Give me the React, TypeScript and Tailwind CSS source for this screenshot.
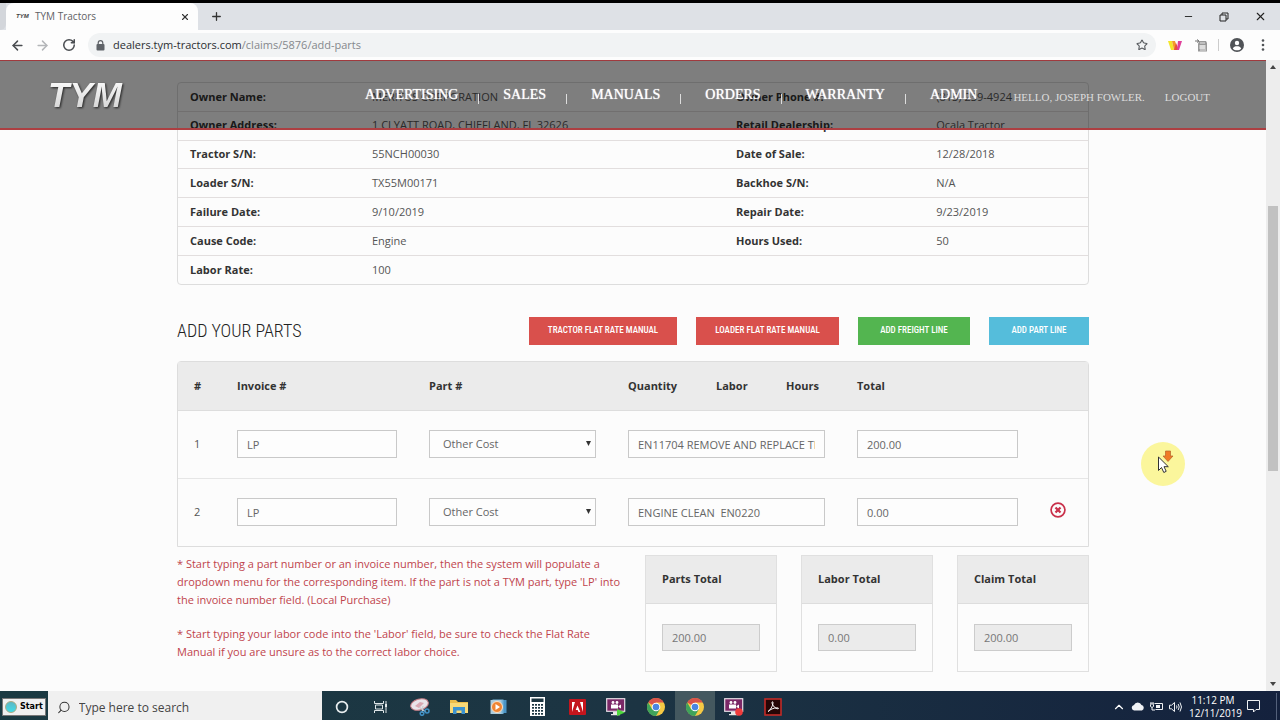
import React from "react";
import {
  ArrowLeft,
  ArrowRight,
  ChevronUp,
  Minus,
  Plus,
  RotateCw,
  Search,
  Star,
  X,
} from "lucide-react";

const details: [string, string, string, string][] = [
  ["Owner Name:", "MERITUS CORPORATION", "Owner Phone #:", "(813) 239-4924"],
  ["Owner Address:", "1 CLYATT ROAD, CHIEFLAND, FL 32626", "Retail Dealership:", "Ocala Tractor"],
  ["Tractor S/N:", "55NCH00030", "Date of Sale:", "12/28/2018"],
  ["Loader S/N:", "TX55M00171", "Backhoe S/N:", "N/A"],
  ["Failure Date:", "9/10/2019", "Repair Date:", "9/23/2019"],
  ["Cause Code:", "Engine", "Hours Used:", "50"],
  ["Labor Rate:", "100", "", ""],
];

const navItems = ["ADVERTISING", "SALES", "MANUALS", "ORDERS", "WARRANTY", "ADMIN"];

const parts = [
  { n: 1, invoice: "LP", labor: "EN11704 REMOVE AND REPLACE THE ENGINE", total: "200.00", removable: false },
  { n: 2, invoice: "LP", labor: "ENGINE CLEAN  EN0220", total: "0.00", removable: true },
];

const totals = [
  { id: "parts-total", label: "Parts Total", value: "200.00" },
  { id: "labor-total", label: "Labor Total", value: "0.00" },
  { id: "claim-total", label: "Claim Total", value: "200.00" },
];

function BrowserChrome() {
  return (
    <div className="shrink-0 border-t-[3px] border-black bg-[#dee1e6]">
      <div className="flex h-[27px] items-stretch">
        <div className="w-[6px] rounded-br-md bg-[#d3d6db]" />
        <div className="flex w-[192px] items-center rounded-t-lg bg-[#fdfdfd] pl-[10px] pr-2">
          <span className="w-[19px] font-['Liberation_Sans'] text-[6px] font-bold italic text-[#444]">TYM</span>
          <span className="flex-1 text-[10px] text-[#5f6165]">TYM Tractors</span>
          <button aria-label="Close tab" className="text-[#333]"><X size={10} strokeWidth={2.6} /></button>
        </div>
        <button aria-label="New tab" className="ml-3 text-[#333]"><Plus size={13} strokeWidth={2.4} /></button>
        <div className="ml-auto flex items-center gap-[25px] pr-[13px] text-[#222]">
          <button aria-label="Minimize"><Minus size={11} strokeWidth={2} /></button>
          <button aria-label="Restore">
            <svg width="10" height="10" viewBox="0 0 10 10" fill="none" stroke="#222" aria-hidden="true">
              <path d="M1 3h6v6H1zM3 3V1h6v6H7" />
            </svg>
          </button>
          <button aria-label="Close"><X size={13} strokeWidth={2} /></button>
        </div>
      </div>
      <div className="flex h-[30px] items-center bg-[#fdfdfd] pl-[10px] pr-[15px]">
        <button aria-label="Back" className="text-[#4a4d51]"><ArrowLeft size={15} strokeWidth={2.4} /></button>
        <button aria-label="Forward" className="ml-[10px] text-[#b4b6b9]"><ArrowRight size={15} strokeWidth={2.4} /></button>
        <button aria-label="Reload" className="ml-[12px] text-[#4a4d51]"><RotateCw size={14} strokeWidth={2.6} /></button>
        <div className="ml-[12px] flex h-6 flex-1 items-center rounded-full bg-[#f1f3f4] pl-2 pr-2">
          <svg width="9" height="11" viewBox="0 0 9 11" aria-hidden="true">
            <rect x="0.5" y="4" width="8" height="6.5" rx="1" fill="#5f6368" />
            <path d="M2.2 4.500V3a2.300 2.300 0 0 1 4.600 0v1.500" fill="none" stroke="#5f6368" strokeWidth="1.200" />
          </svg>
          <a href="#url" className="ml-2 flex-1 text-[11px] text-[#85888c]">
            <span className="text-[#2c2e31]">dealers.tym-tractors.com</span>/claims/5876/add-parts
          </a>
          <button aria-label="Bookmark" className="text-[#55585c]"><Star size={12} strokeWidth={2.2} /></button>
        </div>
        <div className="ml-3 flex items-center">
          <svg width="14" height="11" viewBox="0 0 14 11" aria-hidden="true">
            <path d="M0 1h4l2 9H3z" fill="#f4e72b" />
            <path d="M4 1h3l3 9H6z" fill="#f39a2d" />
            <path d="M6 10 8 3l3 7z" fill="#e8503f" />
            <path d="M9 10 10 1h4l-3 9z" fill="#e0409b" />
          </svg>
          <svg width="13" height="13" viewBox="0 0 13 13" className="ml-[13px]" aria-hidden="true">
            <path d="M0 2h4M2 .5 4 2 2 3.500" stroke="#777" fill="none" />
            <path d="M4 2h7l1 2v8.500H3V5z" fill="#999" />
            <path d="M5 4h5M5 11h6" stroke="#e6e6e6" />
            <rect x="4.500" y="6" width="6" height="4" fill="#ddd" />
          </svg>
          <div className="ml-[10px] h-3 w-px bg-[#ccc]" />
          <svg width="14" height="14" viewBox="0 0 14 14" className="ml-[11px]" aria-hidden="true">
            <circle cx="7" cy="7" r="7" fill="#505357" />
            <circle cx="7" cy="5" r="2.200" fill="#fff" />
            <path d="M2.800 10.500C3.500 8.700 5 8.200 7 8.200s3.500.500 4.200 2.300C10 12 8.700 12.300 7 12.300S4 12 2.800 10.500z" fill="#fff" />
          </svg>
          <svg width="4" height="12" viewBox="0 0 4 12" className="ml-[17px]" aria-hidden="true">
            <circle cx="2" cy="1.500" r="1.300" fill="#505357" />
            <circle cx="2" cy="6" r="1.300" fill="#505357" />
            <circle cx="2" cy="10.500" r="1.300" fill="#505357" />
          </svg>
        </div>
      </div>
    </div>
  );
}

function SiteHeader() {
  return (
    <header className="absolute inset-x-0 top-0 flex h-[70px] items-center border-b-2 border-t border-b-[#ad3f42] border-t-[#a03a3e] bg-black/50 pl-12 pr-[56px] font-['Liberation_Serif',serif]">
      <a
        href="#home"
        className="bg-linear-to-b from-white to-[#d0d0d0] bg-clip-text pr-1 font-['Liberation_Sans',sans-serif] text-[35px] font-bold italic leading-[36px] text-transparent drop-shadow-[1px_1px_1px_#222]"
      >
        TYM
      </a>
      <nav className="ml-auto flex items-center text-[14px] leading-[16px] text-white [text-shadow:0_0_1px_#fff]">
        {navItems.map((item, i) => (
          <React.Fragment key={item}>
            {i > 0 && <span className="ml-5 mr-6 mt-2 h-[10px] w-px bg-[#ddd]" />}
            <a href="#nav">{item}</a>
          </React.Fragment>
        ))}
      </nav>
      <div className="ml-9 flex gap-5 pt-1 text-[11px] leading-[16px] text-[#dcdcdc]">
        <a href="#profile">HELLO, JOSEPH FOWLER.</a>
        <a href="#logout">LOGOUT</a>
      </div>
    </header>
  );
}

const fieldClass =
  "block h-7 w-full rounded-none border border-[#c9c9c9] bg-[#fdfdfd] px-[9px] text-[11px] text-[#666] outline-none";
const actionClass =
  "h-7 font-['Roboto_Condensed','Roboto',sans-serif] text-[9px] font-medium text-white";

function Claim() {
  return (
    <main className="mx-auto w-full max-w-[912px] pt-[22px] text-[11px] text-[#555]">
      <div className="rounded border border-[#ddd]">
        <table className="h-[201px] w-full table-fixed border-collapse text-left">
          <colgroup>
            <col className="w-[20%]" />
            <col className="w-[40%]" />
            <col className="w-[22%]" />
            <col className="w-[18%]" />
          </colgroup>
          <tbody>
            {details.map(([a, b, c, d]) => (
              <tr key={a} className="border-b border-[#e2dede] last:border-b-0">
                <th scope="row" className="whitespace-nowrap px-3 font-bold text-[#333]">{a}</th>
                <td className="whitespace-nowrap px-3">{b}</td>
                <th scope="row" className="whitespace-nowrap px-3 font-bold text-[#333]">{c}</th>
                <td className="whitespace-nowrap px-3">{d}</td>
              </tr>
            ))}
          </tbody>
        </table>
      </div>

      <div className="mt-8 flex items-center justify-between">
        <h2 className="font-['Roboto_Condensed','Roboto',sans-serif] text-[18px] font-light leading-7 text-[#222]">
          ADD YOUR PARTS
        </h2>
        <div className="flex gap-[19px]">
          <button className={`${actionClass} w-[148px] bg-[#d9504c]`}>TRACTOR FLAT RATE MANUAL</button>
          <button className={`${actionClass} w-[143px] bg-[#d9504c]`}>LOADER FLAT RATE MANUAL</button>
          <button className={`${actionClass} w-[112px] bg-[#53b550]`}>ADD FREIGHT LINE</button>
          <button className={`${actionClass} w-[100px] bg-[#55bddb]`}>ADD PART LINE</button>
        </div>
      </div>

      <div className="mt-4 rounded-t border border-[#ddd]">
        <table className="w-full table-fixed border-collapse text-left">
          <colgroup>
            <col className="w-[43px]" />
            <col className="w-[192px]" />
            <col className="w-[199px]" />
            <col className="w-[88px]" />
            <col className="w-[70px]" />
            <col className="w-[71px]" />
            <col className="w-[193px]" />
            <col />
          </colgroup>
          <thead>
            <tr className="h-12 border-b border-[#ddd] bg-[#ebebeb] text-[#333]">
              {["#", "Invoice #", "Part #", "Quantity", "Labor", "Hours", "Total", ""].map((h) => (
                <th key={h} className="px-4 font-bold">{h}</th>
              ))}
            </tr>
          </thead>
          <tbody>
            {parts.map((p) => (
              <tr key={p.n} className="h-[68px] border-b border-[#e6e6e6] last:border-b-0">
                <td className="px-4">{p.n}</td>
                <td className="px-4"><input aria-label={`Invoice # ${p.n}`} defaultValue={p.invoice} className={fieldClass} /></td>
                <td className="px-4">
                  <div className="relative">
                    <select aria-label={`Part # ${p.n}`} className={`${fieldClass} appearance-none pl-[13px]`}>
                      <option>Other Cost</option>
                    </select>
                    <svg width="5" height="6" viewBox="0 0 5 6" className="pointer-events-none absolute right-[5px] top-[11px]" aria-hidden="true">
                      <path d="M0 0h5L2.500 5z" fill="#333" />
                    </svg>
                  </div>
                </td>
                <td colSpan={3} className="px-4"><input aria-label={`Labor ${p.n}`} defaultValue={p.labor} className={fieldClass} /></td>
                <td className="px-4"><input aria-label={`Total ${p.n}`} defaultValue={p.total} className={fieldClass} /></td>
                <td className="px-4">
                  {p.removable && (
                    <button aria-label="Remove line" className="block pb-1">
                      <svg width="16" height="16" viewBox="0 0 16 16">
                        <circle cx="8" cy="8" r="6.900" fill="none" stroke="#c9304a" strokeWidth="1.700" />
                        <path d="m5.500 5.500 5 5m0-5-5 5" stroke="#c9304a" strokeWidth="2.200" />
                      </svg>
                    </button>
                  )}
                </td>
              </tr>
            ))}
          </tbody>
        </table>
      </div>

      <div className="mt-2 flex items-start justify-between">
        <div className="w-[445px] space-y-4 leading-[18px] text-[#c0444c]">
          <p>
            * Start typing a part number or an invoice number, then the system will populate a
            dropdown menu for the corresponding item. If the part is not a TYM part, type 'LP' into
            the invoice number field. (Local Purchase)
          </p>
          <p>
            * Start typing your labor code into the 'Labor' field, be sure to check the Flat Rate
            Manual if you are unsure as to the correct labor choice.
          </p>
        </div>
        <div className="flex gap-6">
          {totals.map((t) => (
            <section key={t.id} className="w-[132px] border border-[#e0e0e0]">
              <label htmlFor={t.id} className="flex h-12 items-center border-b border-[#ddd] bg-[#ebebeb] px-4 font-bold text-[#333]">
                {t.label}
              </label>
              <div className="px-4 py-5">
                <input
                  id={t.id}
                  readOnly
                  value={t.value}
                  className="block h-[27px] w-full border border-[#ccc] bg-[#ebebeb] px-[9px] text-[11px] text-[#777] outline-none"
                />
              </div>
            </section>
          ))}
        </div>
      </div>
    </main>
  );
}

function Scrollbar() {
  return (
    <div className="flex w-[14px] shrink-0 flex-col items-center bg-[#ededed] py-[5px]">
      <svg width="6" height="4" viewBox="0 0 6 4" aria-hidden="true"><path d="M0 4h6L3 0z" fill="#444" /></svg>
      <div className="grow-[137]" />
      <div className="w-[10px] grow-[265] bg-[#c1c1c1]" />
      <div className="grow-[211]" />
      <svg width="6" height="4" viewBox="0 0 6 4" aria-hidden="true"><path d="M0 0h6L3 4z" fill="#444" /></svg>
    </div>
  );
}

function Pointer() {
  return (
    <svg width="46" height="46" viewBox="0 0 46 46" className="pointer-events-none absolute left-[1140px] top-[381px]" aria-hidden="true">
      <circle cx="23" cy="23" r="22" fill="#fbf69c" />
      <path d="M25.500 10h5v5h2.500L28 20.500 23 15h2.500z" fill="#f07a26" stroke="#b5622b" strokeWidth="0.700" />
      <path d="M18.500 16v13.500l3-3 2.300 5 2.400-1.200-2.200-4.600h4.300z" fill="#fff" stroke="#333" strokeWidth="1" />
    </svg>
  );
}

const Chrome = () => (
  <svg width="18" height="18" viewBox="0 0 18 18" aria-hidden="true">
    <circle cx="9" cy="9" r="9" fill="#f6c944" />
    <path d="M9 9 1.200 4.500A9 9 0 0 1 16.800 4.500H9z" fill="#d9534a" />
    <path d="M1.200 4.500A9 9 0 0 0 9 18l3.900-6.750L9 9 5.100 11.250z" fill="#3fa35b" />
    <circle cx="9" cy="9" r="4.300" fill="#fff" />
    <circle cx="9" cy="9" r="3.300" fill="#4a86e0" />
  </svg>
);

const Recorder = ({ children }: { children: React.ReactNode }) => (
  <svg width="20" height="18" viewBox="0 0 20 18" aria-hidden="true">
    <rect x="0.700" y="0.700" width="18" height="12.600" fill="#7b2867" stroke="#e6dfe6" strokeWidth="1.200" />
    <path d="M7 14h5v2h2v1.200H5V16h2z" fill="#e6e6e6" />
    <circle cx="7" cy="4.500" r="1.400" fill="#fff" />
    <circle cx="11" cy="4.500" r="1.400" fill="#fff" />
    <path d="M5 6.500h7v4H5zM12.500 8 15 6.500v4L12.500 9z" fill="#fff" />
    {children}
  </svg>
);

const taskIcons: { name: string; active?: boolean; icon: React.ReactNode }[] = [
  { name: "Cortana", icon: <svg width="14" height="14" viewBox="0 0 14 14"><circle cx="7" cy="7" r="5.400" fill="none" stroke="#e8eef0" strokeWidth="1.700" /></svg> },
  {
    name: "Task View",
    icon: (
      <svg width="14" height="14" viewBox="0 0 14 14" fill="none" stroke="#dfe6e8">
        <path d="M.5 1v2.500h9V1M.5 13v-2.500h9V13M1.500 5h7v4h-7zM12 1v12" />
        <rect x="11" y="4" width="2" height="3" fill="#dfe6e8" stroke="none" />
      </svg>
    ),
  },
  {
    name: "Snipping Tool",
    icon: (
      <svg width="20" height="18" viewBox="0 0 20 18">
        <ellipse cx="9.500" cy="6.500" rx="9" ry="5.500" fill="#e9e4ea" stroke="#c77d86" transform="rotate(-15 9.500 6.500)" />
        <path d="m5 8 5-4 4 1-5 5z" fill="#d9a7b2" />
        <path d="m9 9 7 5M13 8l-1 7" stroke="#c9ccd2" strokeWidth="1.200" />
        <circle cx="17" cy="13" r="2" fill="none" stroke="#3f8fc4" strokeWidth="1.500" />
        <circle cx="12" cy="15.500" r="1.800" fill="none" stroke="#3f8fc4" strokeWidth="1.500" />
      </svg>
    ),
  },
  {
    name: "File Explorer",
    icon: (
      <svg width="18" height="15" viewBox="0 0 18 15">
        <path d="M0 1h6l2 2h10v11H0z" fill="#edbd4a" />
        <path d="M0 4h18v10H0z" fill="#fada77" />
        <path d="M3 15V8h12v7h-3.500v-3.500h-5V15z" fill="#3d93cf" />
      </svg>
    ),
  },
  {
    name: "Media Player",
    icon: (
      <svg width="17" height="16" viewBox="0 0 17 16">
        <rect x="5" y="1" width="11.500" height="13" fill="#4a94c5" />
        <rect x="2.500" y="0.500" width="11" height="14.500" fill="#79b3d6" />
        <rect x="0.500" y="1" width="11" height="14" fill="#a9cbdd" />
        <circle cx="7" cy="8" r="5.500" fill="#ee8432" stroke="#fbe0c5" />
        <path d="m5.500 5 4.500 3-4.500 3z" fill="#fff" />
      </svg>
    ),
  },
  {
    name: "Calculator",
    icon: (
      <svg width="15" height="19" viewBox="0 0 15 19">
        <rect width="15" height="19" fill="#fff" />
        <rect x="1.500" y="1.500" width="12" height="3.500" fill="#1c3540" />
        <g fill="#1c3540">
          {[7, 10, 13, 16].map((y) => [2, 5, 8, 11].map((x) => <rect key={`${x}-${y}`} x={x} y={y} width="2" height="1.700" />))}
        </g>
      </svg>
    ),
  },
  {
    name: "Adobe",
    icon: (
      <svg width="17" height="16" viewBox="0 0 17 16">
        <rect width="17" height="16" rx="1" fill="#c4151d" />
        <path d="M3 13V3h3zM14 13V3h-3zM8.500 6.500 11.300 13H9.500l-.8-2H6.700z" fill="#fff" />
      </svg>
    ),
  },
  { name: "Camtasia", icon: <Recorder><path d="m11 11 8 3.500-8 3.500z" fill="#4ed83d" /></Recorder> },
  { name: "Chrome", icon: <Chrome /> },
  { name: "Chrome window", active: true, icon: <Chrome /> },
  { name: "Recorder", icon: <Recorder><circle cx="15" cy="14" r="3.800" fill="#ef3b3b" /></Recorder> },
  {
    name: "Acrobat Reader",
    icon: (
      <svg width="18" height="18" viewBox="0 0 18 18">
        <rect x="1" y="1" width="16" height="16" fill="#250606" stroke="#c22b27" strokeWidth="1.600" />
        <path d="M4 13.500c2-1 5-5.500 5-9 0-1.200-1.200-1-1 .3.500 3 3.500 6 6 6 1.200-.3.300-1.200-1.500-1-3 .2-6 1.500-8.500 3.700z" fill="none" stroke="#fff" />
      </svg>
    ),
  },
];

function Taskbar() {
  return (
    <footer className="flex h-[29px] shrink-0 items-stretch bg-linear-to-r from-[#1b3a42] via-[#1c3443] to-[#14213d] text-white">
      <button className="m-[2px] mt-[7px] flex h-[18px] w-11 items-center gap-[3px] border border-[#777] bg-[#f0f0f0] px-[2px] font-['DejaVu_Sans',sans-serif] text-[8px] font-bold text-black">
        <span className="size-3 shrink-0 rounded-full border border-[#a9aa83] bg-linear-to-b from-[#5bb7c4] to-[#3cdce8]" />
        Start
      </button>
      <label className="flex w-[274px] items-center bg-[#f0f0f0] pl-[9px] pt-1">
        <Search size={15} strokeWidth={1.800} className="-scale-x-100 text-[#333]" />
        <input
          aria-label="Type here to search"
          placeholder="Type here to search"
          className="ml-2 w-full bg-transparent text-[12px] text-[#333] outline-none placeholder:text-[#444]"
        />
      </label>
      <div className="grid w-[471px] grid-cols-12">
        {taskIcons.map((t) => (
          <button
            key={t.name}
            aria-label={t.name}
            className={t.active ? "flex items-center justify-center bg-[#44585f] pt-[2px]" : "flex items-center justify-center pt-[2px]"}
          >
            {t.icon}
          </button>
        ))}
      </div>
      <div className="ml-auto flex items-center pr-[3px] pt-[2px]">
        <ChevronUp size={14} strokeWidth={2} />
        <svg width="14" height="9" viewBox="0 0 14 9" className="ml-[5px]" aria-hidden="true">
          <path d="M3 8.500A2.800 2.800 0 0 1 3 3a4 4 0 0 1 7.500 0A2.900 2.900 0 0 1 11 8.500z" fill="#f0f2f5" />
        </svg>
        <svg width="13" height="11" viewBox="0 0 13 11" className="ml-[5px]" fill="none" stroke="#f0f2f5" aria-hidden="true">
          <path d="M4.500 2.500h8v6h-7M0 3h4M1 1v2M3 1v2M.5 3.500v2L2 6.500l1.500-1v-2M2 6.500v2.500h3" />
          <rect x="6" y="4" width="4" height="3" fill="#f0f2f5" stroke="none" />
        </svg>
        <svg width="13" height="12" viewBox="0 0 13 12" className="ml-[6px]" fill="none" stroke="#f0f2f5" aria-hidden="true">
          <path d="M.5 4.200h2L5.500 1.500v9l-3-2.700h-2zM7.500 4.500q1 1.500 0 3M9.200 3q2 3 0 6M11 1.500q3 4.500 0 9" />
        </svg>
        <div className="ml-[7px] w-[48px] text-center text-[10px] leading-[13px]">
          <div>11:12 PM</div>
          <div>12/11/2019</div>
        </div>
        <svg width="13" height="13" viewBox="0 0 13 13" className="ml-[10px]" fill="none" stroke="#f0f2f5" aria-hidden="true">
          <path d="M.5.5h12v9H9L6.500 12V9.500h-6z" />
        </svg>
        <div className="ml-4 h-full w-px bg-[#53607a]" />
      </div>
    </footer>
  );
}

export default function App() {
  return (
    <div className="flex h-screen flex-col overflow-hidden bg-[#fcfcfc] font-['Open_Sans','Noto_Sans',sans-serif]">
      <BrowserChrome />
      <div className="relative flex min-h-0 flex-1">
        <div className="relative min-w-0 flex-1 overflow-hidden">
          <Claim />
          <SiteHeader />
          <Pointer />
        </div>
        <Scrollbar />
      </div>
      <Taskbar />
    </div>
  );
}
